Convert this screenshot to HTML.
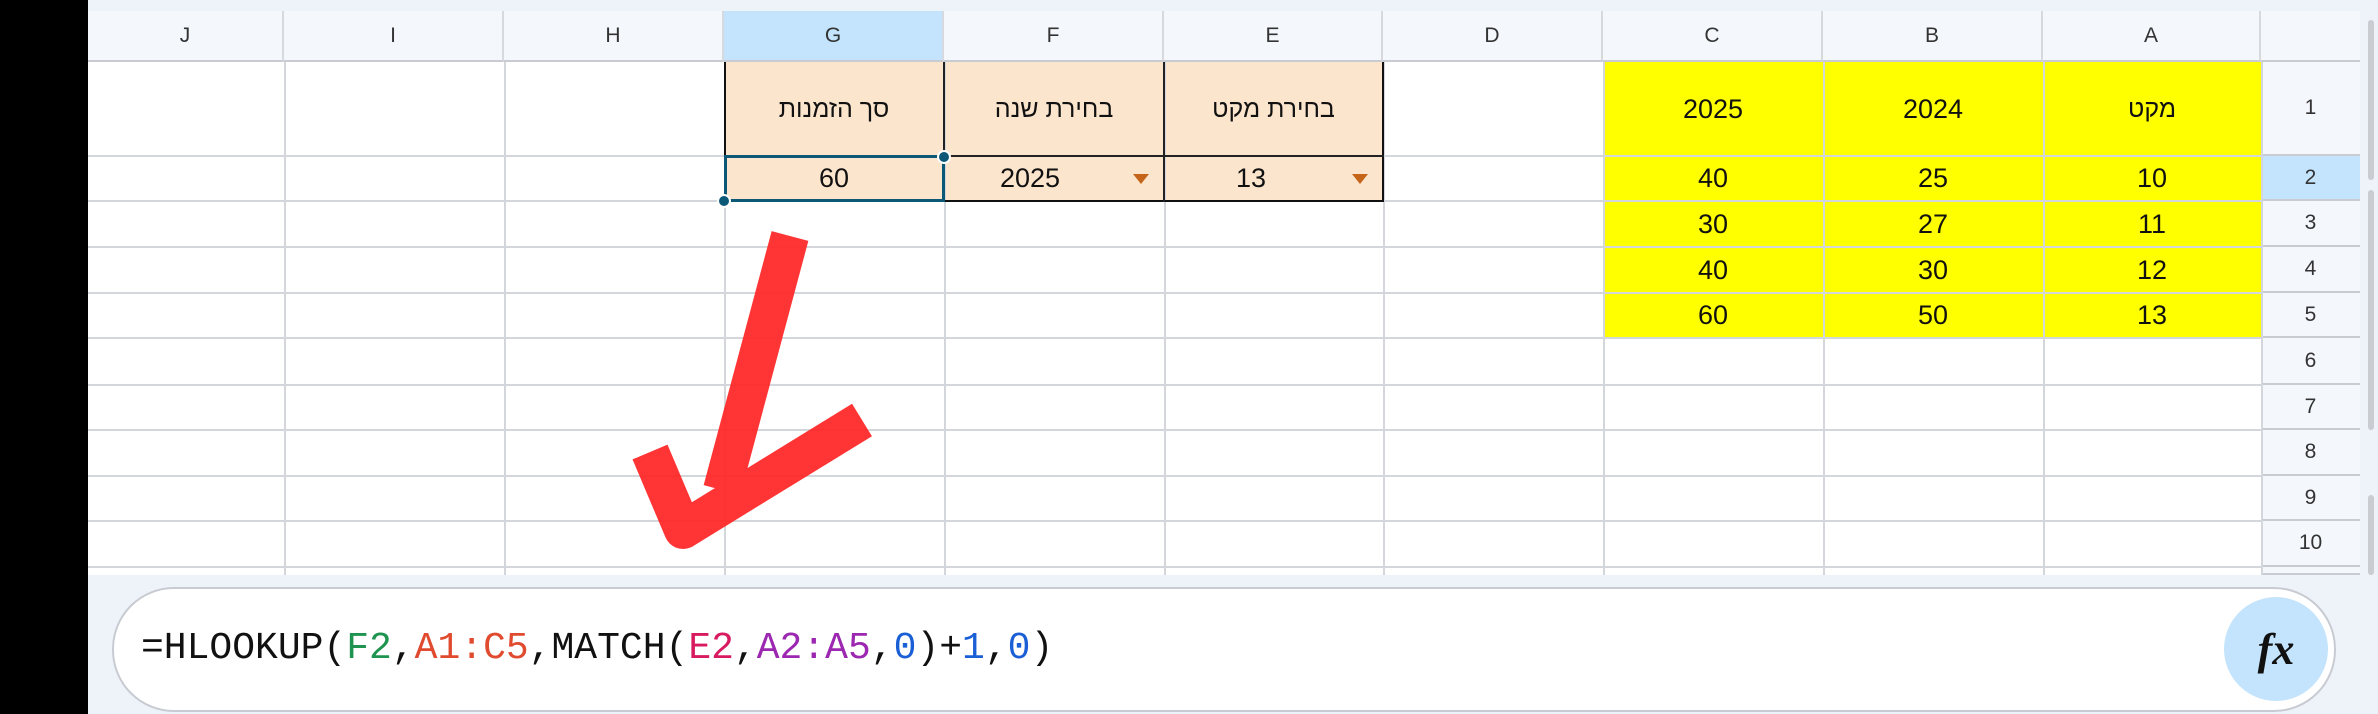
<!DOCTYPE html>
<html><head><meta charset="utf-8"><style>
*{margin:0;padding:0;box-sizing:border-box}
body{width:2378px;height:714px;overflow:hidden;background:#eef3fa;position:relative;font-family:"Liberation Sans","Noto Sans CJK SC",sans-serif}
.abs{position:absolute}
.cell{position:absolute;display:flex;align-items:center;justify-content:center;font-size:27px;color:#111}
.ch{position:absolute;top:11px;height:51px;display:flex;align-items:center;justify-content:center;font-size:21px;color:#333;background:#f4f7fc;border-right:2px solid #d6d9de;border-bottom:2px solid #c8ccd2}
.rh{position:absolute;left:2261px;width:99px;display:flex;align-items:center;justify-content:center;font-size:21px;color:#333;background:#f4f7fc;border-bottom:2px solid #c8ccd2}
.vl{position:absolute;top:62px;height:513px;width:2px;background:#d3d6da}
.hl{position:absolute;left:88px;width:2173px;height:2px;background:#d3d6da}
.tri{position:absolute;width:0;height:0;border-left:8px solid transparent;border-right:8px solid transparent;border-top:10px solid #c5651a}
</style></head><body>
<div class="abs" style="left:0;top:0;width:88px;height:714px;background:#000"></div>
<div class="abs" style="left:88px;top:62px;width:2173px;height:513px;background:#fff"></div>
<!-- column headers -->
<div class="ch" style="left:88px;width:196px">J</div>
<div class="ch" style="left:284px;width:220px">I</div>
<div class="ch" style="left:504px;width:220px">H</div>
<div class="ch" style="left:724px;width:220px;background:#c3e4fc">G</div>
<div class="ch" style="left:944px;width:220px">F</div>
<div class="ch" style="left:1164px;width:219px">E</div>
<div class="ch" style="left:1383px;width:220px">D</div>
<div class="ch" style="left:1603px;width:220px">C</div>
<div class="ch" style="left:1823px;width:220px">B</div>
<div class="ch" style="left:2043px;width:218px">A</div>
<div class="ch" style="left:2261px;width:99px;border-right:none"></div>
<!-- fills -->
<div class="abs" style="left:724px;top:62px;width:659px;height:139px;background:#fce5cd"></div>
<div class="abs" style="left:1603px;top:62px;width:658px;height:276px;background:#ffff00"></div>
<!-- grid lines -->
<div class="vl" style="left:284px"></div><div class="vl" style="left:504px"></div><div class="vl" style="left:724px"></div>
<div class="vl" style="left:944px"></div><div class="vl" style="left:1164px"></div><div class="vl" style="left:1383px"></div>
<div class="vl" style="left:1603px"></div><div class="vl" style="left:1823px"></div><div class="vl" style="left:2043px"></div>
<div class="hl" style="top:155px"></div><div class="hl" style="top:200px"></div><div class="hl" style="top:246px"></div>
<div class="hl" style="top:292px"></div><div class="hl" style="top:337px"></div><div class="hl" style="top:384px"></div>
<div class="hl" style="top:429px"></div><div class="hl" style="top:475px"></div><div class="hl" style="top:520px"></div>
<div class="hl" style="top:566px"></div>
<!-- dark borders around E1:G2 -->
<div class="abs" style="left:724px;top:62px;width:660px;height:140px;border:2px solid #111;border-top:none"></div>
<div class="abs" style="left:724px;top:155px;width:660px;height:2px;background:#222"></div>
<div class="abs" style="left:943px;top:62px;width:2px;height:140px;background:#222"></div>
<div class="abs" style="left:1163px;top:62px;width:2px;height:140px;background:#222"></div>
<!-- row headers -->
<div class="rh" style="top:62px;height:94px">1</div>
<div class="rh" style="top:156px;height:45px;background:#c3e4fc">2</div>
<div class="rh" style="top:201px;height:46px">3</div>
<div class="rh" style="top:247px;height:46px">4</div>
<div class="rh" style="top:293px;height:45px">5</div>
<div class="rh" style="top:338px;height:47px">6</div>
<div class="rh" style="top:385px;height:45px">7</div>
<div class="rh" style="top:430px;height:46px">8</div>
<div class="rh" style="top:476px;height:45px">9</div>
<div class="rh" style="top:521px;height:46px">10</div>
<div class="rh" style="top:567px;height:8px"></div>
<div class="abs" style="left:2261px;top:62px;width:2px;height:513px;background:#d3d6da"></div>
<div class="abs" style="left:2368px;top:20px;width:6px;height:160px;background:#c9ccd0;border-radius:3px"></div>
<div class="abs" style="left:2368px;top:190px;width:6px;height:240px;background:#c9ccd0;border-radius:3px"></div>
<div class="abs" style="left:2368px;top:495px;width:6px;height:80px;background:#c9ccd0;border-radius:3px"></div>
<!-- cells -->
<div class="cell" style="left:724px;top:62px;width:220px;height:94px;font-size:25px">סך הזמנות</div>
<div class="cell" style="left:944px;top:62px;width:220px;height:94px;font-size:25px">בחירת שנה</div>
<div class="cell" style="left:1164px;top:62px;width:219px;height:94px;font-size:25px">בחירת מקט</div>
<div class="cell" style="left:724px;top:156px;width:220px;height:45px">60</div>
<div class="cell" style="left:944px;top:156px;width:200px;height:45px;justify-content:flex-start;padding-left:56px">2025</div>
<div class="cell" style="left:1164px;top:156px;width:200px;height:45px;justify-content:flex-start;padding-left:72px">13</div>
<div class="tri" style="left:1133px;top:174px"></div>
<div class="tri" style="left:1352px;top:174px"></div>
<!-- selection -->
<div class="abs" style="left:724px;top:155px;width:221px;height:47px;border:3px solid #0b5877"></div>
<div class="abs" style="left:937px;top:150px;width:14px;height:14px;border-radius:50%;background:#0b5877;border:2px solid #fff"></div>
<div class="abs" style="left:717px;top:194px;width:14px;height:14px;border-radius:50%;background:#0b5877;border:2px solid #fff"></div>
<!-- yellow table -->
<div class="cell" style="left:1603px;top:62px;width:220px;height:94px">2025</div>
<div class="cell" style="left:1823px;top:62px;width:220px;height:94px">2024</div>
<div class="cell" style="left:2043px;top:62px;width:218px;height:94px;font-size:25px">מקט</div>
<div class="cell" style="left:1603px;top:156px;width:220px;height:45px">40</div>
<div class="cell" style="left:1823px;top:156px;width:220px;height:45px">25</div>
<div class="cell" style="left:2043px;top:156px;width:218px;height:45px">10</div>
<div class="cell" style="left:1603px;top:201px;width:220px;height:46px">30</div>
<div class="cell" style="left:1823px;top:201px;width:220px;height:46px">27</div>
<div class="cell" style="left:2043px;top:201px;width:218px;height:46px">11</div>
<div class="cell" style="left:1603px;top:247px;width:220px;height:46px">40</div>
<div class="cell" style="left:1823px;top:247px;width:220px;height:46px">30</div>
<div class="cell" style="left:2043px;top:247px;width:218px;height:46px">12</div>
<div class="cell" style="left:1603px;top:293px;width:220px;height:45px">60</div>
<div class="cell" style="left:1823px;top:293px;width:220px;height:45px">50</div>
<div class="cell" style="left:2043px;top:293px;width:218px;height:45px">13</div>
<!-- red check -->
<svg class="abs" style="left:0;top:0" width="2378" height="714">
<g stroke="#ff2a2a" stroke-width="38" fill="none" stroke-linecap="butt" stroke-linejoin="round" opacity="0.95">
<path d="M790 236 L722 490"/>
<path d="M650 452 L683 530 L862 420"/>
</g>
</svg>
<!-- formula bar -->
<div class="abs" style="left:88px;top:575px;width:2290px;height:139px;background:#eef3fa"></div>
<div class="abs" style="left:112px;top:587px;width:2224px;height:125px;background:#fff;border:2px solid #c8ccd2;border-radius:62px"></div>
<div class="abs" style="left:141px;top:625px;font-family:'Liberation Mono',monospace;font-size:38px;color:#111;white-space:pre;line-height:48px">=HLOOKUP(<span style="color:#1e9450">F2</span>,<span style="color:#e04a2f">A1:C5</span>,MATCH(<span style="color:#d81b60">E2</span>,<span style="color:#9c27b0">A2:A5</span>,<span style="color:#1a5fd6">0</span>)+<span style="color:#1a5fd6">1</span>,<span style="color:#1a5fd6">0</span>)</div>
<div class="abs" style="left:2224px;top:597px;width:104px;height:104px;border-radius:50%;background:#c3e4fc;display:flex;align-items:center;justify-content:center;font-family:'Liberation Serif',serif;font-style:italic;font-weight:bold;font-size:44px;color:#111">fx</div>
</body></html>
